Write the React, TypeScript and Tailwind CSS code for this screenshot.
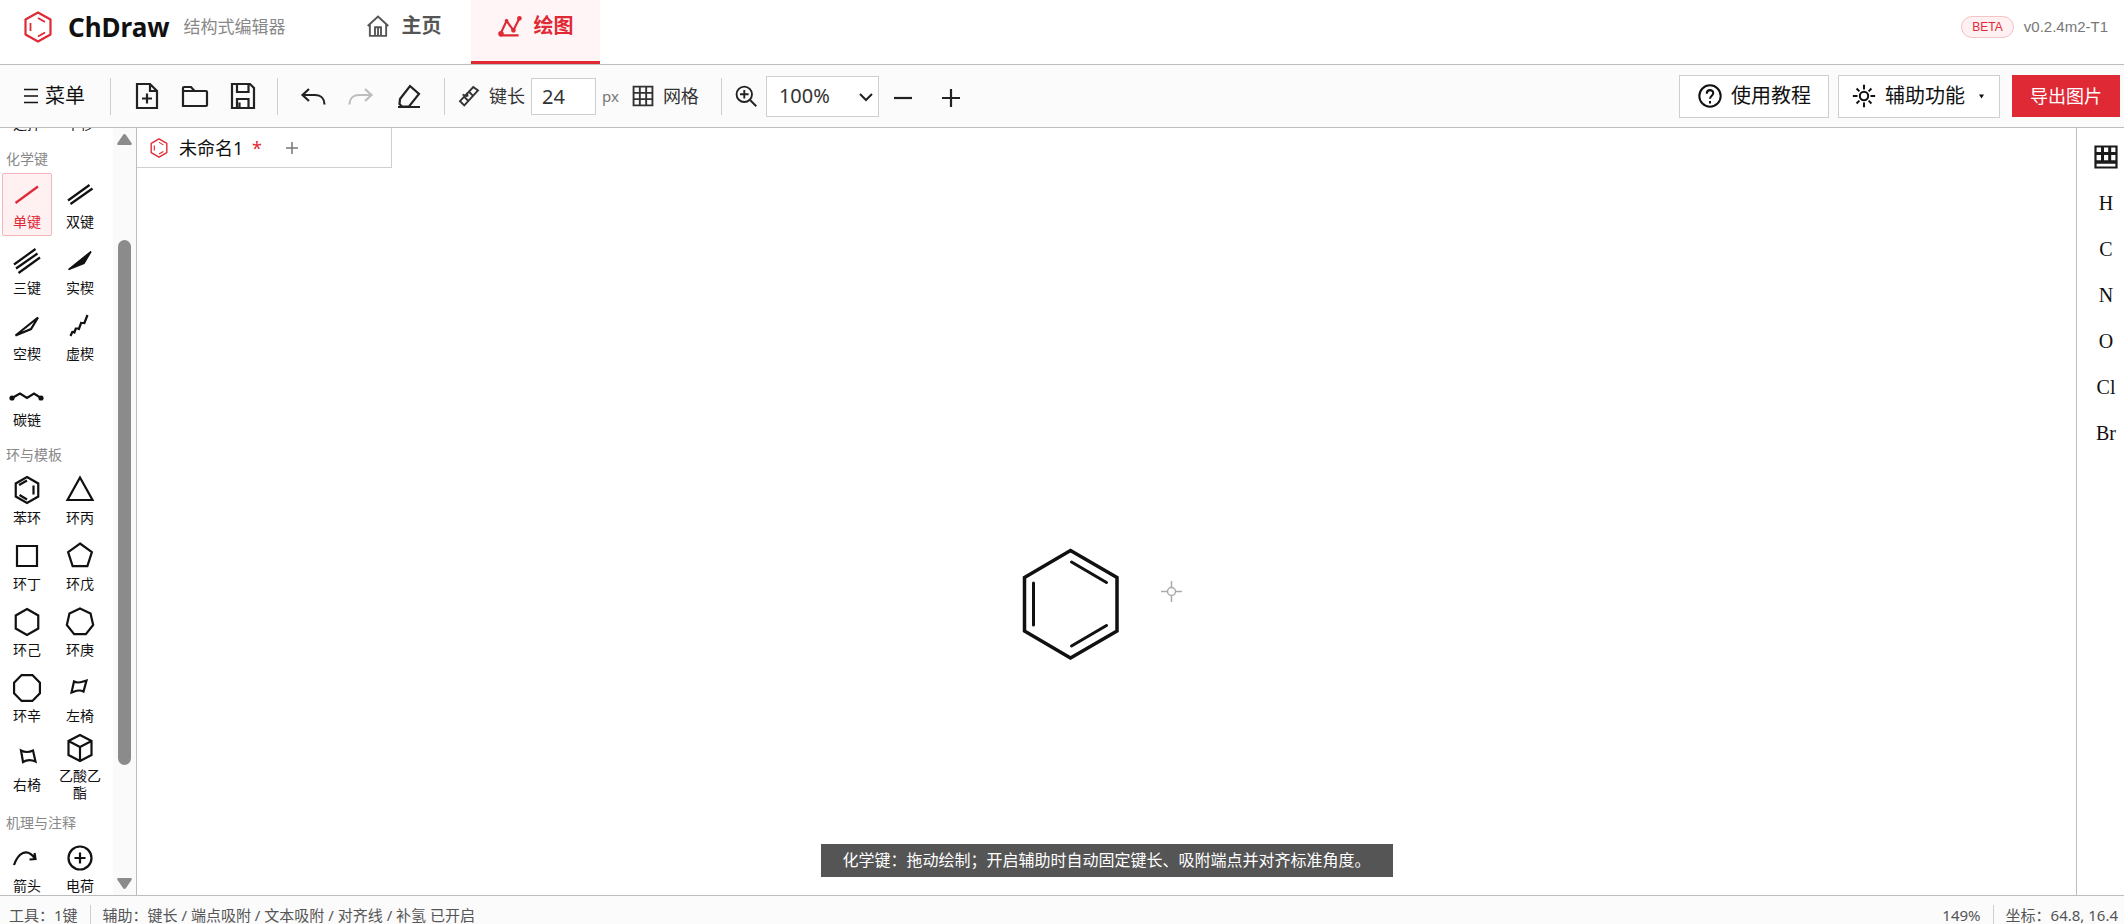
import { useLayoutEffect, useRef, useState } from "react";
import type { ReactNode } from "react";

const sans = "font-['Noto_Sans','Noto_Sans_CJK_SC',sans-serif]";

type Tool = { name: string; icon: ReactNode };
type Section = { title?: string; tools: Tool[] };

// regular polygon points for the ring icons
const ring = (n: number, r: number, start = -90, cy = 14) =>
  Array.from({ length: n }, (_, i) => {
    const a = ((start + (360 / n) * i) * Math.PI) / 180;
    return `${(14 + r * Math.cos(a)).toFixed(2)},${(cy + r * Math.sin(a)).toFixed(2)}`;
  }).join(" ");

const sections: Section[] = [
  {
    tools: [
      { name: "选择", icon: <path d="M7 5l14 8-6 2-3 6z" /> },
      { name: "平移", icon: <path d="M14 4v20M4 14h20" /> },
    ],
  },
  {
    title: "化学键",
    tools: [
      { name: "单键", icon: <path d="M2.500 23L25 6.500" /> },
      { name: "双键", icon: <path d="M2 20.500L23.500 5M4.500 24L26.500 8.500" /> },
      { name: "三键", icon: <path d="M1 18.500L22.500 3M3 22.500L24.500 7.500M5.500 27L27 11.500" /> },
      { name: "实楔", icon: <path d="M2.500 23.500L25 5.500L18 17.500z" fill="currentColor" strokeWidth="1.5" /> },
      { name: "空楔", icon: <path d="M2.500 23.500L25 5.500L18 17z" /> },
      { name: "虚楔", icon: <path d="M4.500 24L6.500 19.500M8 21.500L10 16M12.500 18L15.500 10M18 12L21.500 3M6 20L8.500 19.500M9.500 16.500L13 16.500M15 11L18 11" /> },
      {
        name: "碳链",
        icon: (
          <>
            <path d="M-1 20L7 15.500L14 20L21 15.500L28 20" />
            <circle cx="-1" cy="20" r="1.500" fill="currentColor" />
            <circle cx="28" cy="20" r="1.500" fill="currentColor" />
          </>
        ),
      },
    ],
  },
  {
    title: "环与模板",
    tools: [
      {
        name: "苯环",
        icon: (
          <>
            <polygon points={ring(6, 13)} />
            <path d="M6 9L14 4.500M20.500 9.500V18.500M6.500 19L14 23.500" />
          </>
        ),
      },
      { name: "环丙", icon: <path d="M14 1.500L26.500 24H1.500z" /> },
      { name: "环丁", icon: <path d="M4 4h20v20H4z" /> },
      { name: "环戊", icon: <polygon points={ring(5, 12.5)} /> },
      { name: "环己", icon: <polygon points={ring(6, 13)} /> },
      { name: "环庚", icon: <polygon points={ring(7, 13.5)} /> },
      { name: "环辛", icon: <polygon points={ring(8, 14, -67.5)} /> },
      { name: "左椅", icon: <path d="M8 7.500C12 10 15 8 20.500 6.500L17.500 17.500C13 15 10 17 5.500 18.500z" /> },
      { name: "右椅", icon: <path d="M8 7.500C12 9.500 16 9.500 20 7.500L22.500 18.500C18 16.500 14 16.500 10 19z" /> },
      { name: "乙酸乙酯", icon: <path d="M14 1L25.500 7V21L14 27L2.500 21V7zM2.500 7L14 13L25.500 7M14 13V27" /> },
    ],
  },
  {
    title: "机理与注释",
    tools: [
      { name: "箭头", icon: <path d="M1 21C5 9 14 3 22 14.500M16.500 15.500L22.500 15L21.500 9" /> },
      {
        name: "电荷",
        icon: (
          <>
            <circle cx="14" cy="14" r="11.500" />
            <path d="M14 8.500v11M8.500 14h11" />
          </>
        ),
      },
    ],
  },
];

const elements = ["H", "C", "N", "O", "Cl", "Br"];

const Logo = ({ className }: { className: string }) => (
  <svg className={className} viewBox="0 0 28 32" fill="none" stroke="currentColor" strokeWidth="2.200" strokeLinejoin="round">
    <path d="M14 1.500L26.500 8.500V23.500L14 30.500L1.500 23.500V8.500z" />
    <path d="M14 7L21 11M6.500 12V20M14 25.500L21 21.500" strokeWidth="1.800" />
  </svg>
);

const Icon = ({ className, width = 2.2, children }: { className: string; width?: number; children: ReactNode }) => (
  <svg className={className} viewBox="0 0 28 28" fill="none" stroke="currentColor" strokeWidth={width} aria-hidden="true">
    {children}
  </svg>
);

const Divider = () => <span className="h-[37px] w-px shrink-0 bg-[#cfcfcf]" />;

const Header = () => (
  <header className="flex h-[65px] shrink-0 border-b border-[#bdbdbd] bg-white">
    <div className="flex h-[54px] w-[340px] shrink-0 items-center pl-6">
      <Logo className="h-8 w-7 text-[#df2935]" />
      <h1 className="ml-4 text-[26px] font-bold text-[#111]">ChDraw</h1>
      <span className="ml-3.5 text-[17px] text-[#888]">结构式编辑器</span>
    </div>
    <nav className="flex">
      <a href="#home" className="flex h-16 w-[131px] items-center justify-center gap-3 pr-1 pb-3 text-xl font-bold text-[#555]">
        <Icon className="size-6">
          <path d="M2 14L14 3L26 14M4.500 12V25.500H23.500V12M10.500 25V15.500H17.500V25M14 16V25" />
        </Icon>
        主页
      </a>
      <a
        href="#draw"
        className="flex h-16 w-[129px] items-center justify-center gap-3 border-b-[3px] border-[#df2935] bg-[#fff5f6] pb-[9px] text-xl font-bold text-[#df2935]"
      >
        <Icon className="size-6" width={2.5}>
          <path d="M3 23L10 8L18 19L25 5M2 25H24" />
          <circle cx="3.500" cy="23" r="2" fill="currentColor" />
          <circle cx="10" cy="8" r="1" fill="currentColor" />
          <circle cx="18" cy="19" r="1.500" fill="currentColor" />
          <circle cx="25" cy="5" r="1.500" fill="currentColor" />
        </Icon>
        绘图
      </a>
    </nav>
    <div className="ml-auto flex h-[54px] items-center gap-2.5 pr-4 font-['Liberation_Sans',sans-serif]">
      <span className="flex h-[22px] items-center rounded-full border border-[#f3c3c7] bg-[#fff0f1] px-2.5 text-xs text-[#df2935]">BETA</span>
      <span className="text-[15px] text-[#777]">v0.2.4m2-T1</span>
    </div>
  </header>
);

const Toolbar = () => {
  const [bondLength, setBondLength] = useState("24");

  return (
    <div className="flex h-[63px] shrink-0 items-center border-b border-[#bdbdbd] bg-[#fbfbfb] pr-1 text-[#222]">
      <button className="flex w-[110px] items-center gap-1.5 pl-[23px] text-xl text-[#111]">
        <svg className="h-4 w-4" viewBox="0 0 16 16" stroke="currentColor" strokeWidth="1.500" aria-hidden="true">
          <path d="M1 1.500h14M1 8h14M1 14.500h14" />
        </svg>
        菜单
      </button>
      <Divider />
      <div className="flex items-center gap-5 pr-5 pl-[22px]">
        <button aria-label="新建">
          <Icon className="size-7">
            <path d="M4 2H17L24 9V26H4zM17 2V9H24M14 11.500V21.500M9 16.500H19" />
          </Icon>
        </button>
        <button aria-label="打开">
          <Icon className="size-7">
            <path d="M2 24V6Q2 5 3 5H10L13.500 9H25Q26 9 26 10V23Q26 24 25 24zM2.500 9H13" />
          </Icon>
        </button>
        <button aria-label="保存">
          <Icon className="size-7">
            <path d="M3 2H21L25 6V26H3zM8 2V10H19.500V2M8 26V17H19.500V26M10.500 20.500V25" />
          </Icon>
        </button>
      </div>
      <Divider />
      <div className="flex items-center gap-5 px-[21px]">
        <button aria-label="撤销">
          <Icon className="size-7">
            <path d="M10 7L3.500 13L10 19M3.500 13H16C22 13 25.500 17 25.500 22.500" />
          </Icon>
        </button>
        <button aria-label="重做" className="text-[#bdbdbd]" disabled>
          <Icon className="size-7">
            <path d="M18 7L24.500 13L18 19M24.500 13H12C6 13 2.500 17 2.500 22.500" />
          </Icon>
        </button>
        <button aria-label="清除">
          <Icon className="size-7">
            <path d="M5 17L15 4L24 12L14 24.500H7L4.500 22zM3 25H25" />
          </Icon>
        </button>
      </div>
      <Divider />
      <label htmlFor="bond" className="flex items-center gap-2 pr-1.5 pl-3 text-lg text-[#333]">
        <Icon className="size-6">
          <path d="M3.500 20L19 3.500L24.500 7.500L8.500 25zM8.500 15L13 19.500M14 9L18.500 13.500M6.500 12.500L12.500 14.500M11.500 10L12.500 14.500" />
        </Icon>
        键长
      </label>
      <input
        id="bond"
        value={bondLength}
        onChange={(e) => setBondLength(e.target.value)}
        className="h-[37px] w-[65px] border border-[#cfcfcf] bg-white pl-2.5 text-xl text-[#333] outline-none"
      />
      <span className="ml-1.5 text-[15px] text-[#777]">px</span>
      <button className="ml-3 flex items-center gap-2 pr-[22px] text-lg text-[#333]">
        <Icon className="size-6">
          <path d="M3 3H25V25H3zM10.300 3V25M17.700 3V25M3 10.300H25M3 17.700H25" />
        </Icon>
        网格
      </button>
      <Divider />
      <label htmlFor="zoom" aria-label="缩放" className="mr-2 ml-3">
        <Icon className="size-6">
          <circle cx="12" cy="12" r="9" />
          <path d="M19 19L26 26M12 7V17M7 12H17" />
        </Icon>
      </label>
      <div className="relative">
        <select id="zoom" defaultValue="100%" className="h-[41px] w-[113px] appearance-none border border-[#cfcfcf] bg-white pl-3 text-xl text-[#333] outline-none">
          <option>50%</option>
          <option>100%</option>
          <option>200%</option>
        </select>
        <svg className="pointer-events-none absolute top-4 right-1.5 h-2.5 w-3.5" viewBox="0 0 14 10" fill="none" stroke="currentColor" strokeWidth="2">
          <path d="M1 2L7 8L13 2" />
        </svg>
      </div>
      <div className="flex items-center gap-5 pt-1 pl-2.5">
        <button aria-label="缩小">
          <Icon className="size-7">
            <path d="M5 14H23" />
          </Icon>
        </button>
        <button aria-label="放大">
          <Icon className="size-7">
            <path d="M5 14H23M14 5V23" />
          </Icon>
        </button>
      </div>
      <div className="ml-auto flex items-center text-xl text-[#111]">
        <button className="flex h-[43px] w-[150px] items-center justify-center gap-2 border border-[#cfcfcf] bg-white">
          <Icon className="size-[26px]">
            <circle cx="14" cy="14" r="11.500" />
            <path d="M10.500 11.500C10.500 6.500 17.500 6.500 17.500 11C17.500 13.500 14 14 14 17M14 19.500V22" />
          </Icon>
          使用教程
        </button>
        <button className="ml-[9px] flex h-[43px] w-[162px] items-center gap-2 border border-[#cfcfcf] bg-white pl-3">
          <Icon className="size-[26px]">
            <circle cx="14" cy="14" r="4.500" />
            <path d="M14 2V7M14 21V26M2 14H7M21 14H26M6 6L9 9M19 19L22 22M22 6L19 9M9 19L6 22" />
          </Icon>
          辅助功能
          <svg className="ml-1.5 h-[5px] w-[5px]" viewBox="0 0 6 5" fill="currentColor">
            <path d="M0 0H6L3 5z" />
          </svg>
        </button>
        <button className="ml-3 h-[42px] w-[108px] bg-[#df2935] text-lg text-white">导出图片</button>
      </div>
    </div>
  );
};

const Sidebar = () => {
  const [active, setActive] = useState("单键");
  const listRef = useRef<HTMLDivElement>(null);

  useLayoutEffect(() => {
    // start at the bond tools
    if (listRef.current) listRef.current.scrollTop = 53;
  }, []);

  return (
    <aside className="flex w-[137px] shrink-0 border-r border-[#bdbdbd] bg-white">
      <div ref={listRef} className="min-w-0 flex-1 overflow-hidden">
        {sections.map((section, i) => (
          <section key={i} className="last:pb-4">
            {section.title && <h2 className="h-[35px] pt-3 pl-1.5 text-sm leading-[18px] text-[#888]">{section.title}</h2>}
            <div className="grid grid-cols-[50px_50px] gap-[3px] pl-0.5">
              {section.tools.map((tool) => (
                <button
                  key={tool.name}
                  onClick={() => setActive(tool.name)}
                  className={`flex min-h-[63px] flex-col items-center justify-center gap-[5px] rounded-xs border text-sm leading-[17px] ${
                    active === tool.name ? "border-[#f3b6bb] bg-[#fff0f1] text-[#df2935]" : "border-transparent text-[#111]"
                  }`}
                >
                  <svg className="size-7 shrink-0 overflow-visible" viewBox="0 0 28 28" fill="none" stroke="currentColor" strokeWidth="2.200">
                    {tool.icon}
                  </svg>
                  <span className="w-[42px]">{tool.name}</span>
                </button>
              ))}
            </div>
          </section>
        ))}
      </div>
      <div className="flex w-[23px] flex-col items-center bg-[#fafafa] py-1.5 text-[#8b8b8b]">
        <svg className="h-[11px] w-[15px]" viewBox="0 0 15 11" fill="currentColor">
          <path d="M7.500 0Q8.500 0 9 1L14.500 9Q15.500 11 13.500 11H1.500Q-0.500 11 0.500 9L6 1Q6.500 0 7.500 0z" />
        </svg>
        <div className="flex w-[13px] flex-1 flex-col pt-[95px] pb-[113px]">
          <span className="flex-1 rounded-full bg-[#8b8b8b]" />
        </div>
        <svg className="h-[11px] w-[15px] rotate-180" viewBox="0 0 15 11" fill="currentColor">
          <path d="M7.500 0Q8.500 0 9 1L14.500 9Q15.500 11 13.500 11H1.500Q-0.500 11 0.500 9L6 1Q6.500 0 7.500 0z" />
        </svg>
      </div>
    </aside>
  );
};

const Canvas = () => (
  <main className="relative min-w-0 flex-1 bg-white">
    <div className="flex h-10 w-[255px] items-center border-r border-b border-[#cfcfcf] pl-[13px]">
      <Logo className="h-5 w-[18px] text-[#df2935]" />
      <button className="ml-[11px] text-lg text-[#111]">
        未命名1 <span className="ml-1 text-[#df2935]">*</span>
      </button>
      <button aria-label="新标签" className="ml-6 text-[#777]">
        <svg className="size-3" viewBox="0 0 12 12" stroke="currentColor" strokeWidth="1.500">
          <path d="M6 0V12M0 6H12" />
        </svg>
      </button>
    </div>
    {/* molecule on the canvas */}
    <svg className="absolute top-[420px] left-[885px] h-[112px] w-[97px]" viewBox="0 0 97 112" fill="none" stroke="#111" strokeWidth="3.500">
      <path d="M48.500 2.500L95 29.500V83L48.500 110L2.500 83V29.500z" />
      <path d="M49.500 14L84.500 34.500M11.500 35V77M49.500 98L84.500 77.500" strokeWidth="3" strokeLinecap="round" />
    </svg>
    {/* cursor */}
    <svg className="absolute top-[453px] left-[1024px] size-[21px]" viewBox="0 0 21 21" fill="none" stroke="#aaa" strokeWidth="1.500">
      <circle cx="10.500" cy="10.500" r="4" />
      <path d="M10.500 0V6.500M10.500 14.500V21M0 10.500H6.500M14.500 10.500H21" />
    </svg>
    <p className="absolute bottom-[18px] left-1/2 h-[33px] -translate-x-1/2 bg-[#555] px-[22px] text-base leading-[33px] whitespace-nowrap text-white">
      化学键：拖动绘制；开启辅助时自动固定键长、吸附端点并对齐标准角度。
    </p>
  </main>
);

const ElementBar = () => (
  <aside className="flex w-12 shrink-0 flex-col items-center border-l border-[#bdbdbd] bg-white pt-1.5 pl-[11px] font-['Liberation_Serif',serif] text-xl text-[#111]">
    <button aria-label="元素周期表" className="flex h-[46px] items-center">
      <svg className="size-6" viewBox="0 0 24 24" fill="none" stroke="#1b1b1b" strokeWidth="2.200">
        <path d="M1.500 1.500H22.500V22.500H1.500z" />
        <path d="M1 8.500H23M8.500 1V17M15.700 1V17" strokeWidth="3" />
        <path d="M1 17H23" strokeWidth="3.500" />
      </svg>
    </button>
    {elements.map((el) => (
      <button key={el} className="h-[46px]">
        {el}
      </button>
    ))}
  </aside>
);

const StatusBar = () => (
  <footer className="flex h-[29px] shrink-0 items-start overflow-hidden border-t border-[#bdbdbd] bg-[#fbfbfb] pt-[9px] pr-1.5 pl-[9px] text-[15px] leading-5 text-[#555]">
    <span>工具：1键</span>
    <span className="mx-3 h-5 w-px bg-[#cfcfcf]" />
    <span>辅助：键长 / 端点吸附 / 文本吸附 / 对齐线 / 补氢 已开启</span>
    <span className="ml-auto">149%</span>
    <span className="mx-3 h-5 w-px bg-[#cfcfcf]" />
    <span>坐标：64.8, 16.4</span>
  </footer>
);

const App = () => {
  return (
    <div className={`flex h-screen flex-col overflow-hidden bg-white ${sans}`}>
      <Header />
      <Toolbar />
      <div className="flex min-h-0 flex-1">
        <Sidebar />
        <Canvas />
        <ElementBar />
      </div>
      <StatusBar />
    </div>
  );
};

export default App;
